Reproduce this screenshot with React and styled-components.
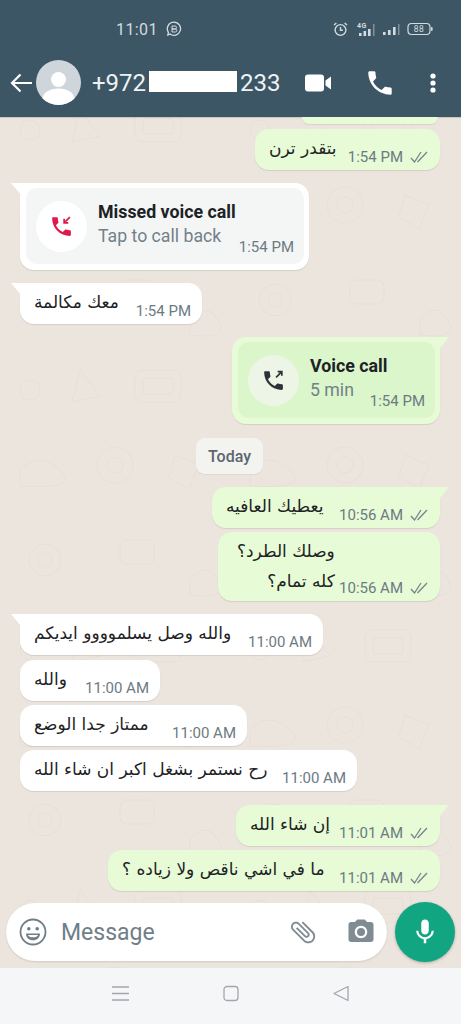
import React from "react";
import styled, { createGlobalStyle } from "styled-components";

const doodle = encodeURIComponent(`<svg xmlns="http://www.w3.org/2000/svg" width="230" height="260" fill="none" stroke="#e7dfd7" stroke-width="1"><circle cx="45" cy="40" r="16"/><circle cx="45" cy="40" r="7"/><rect x="120" y="20" width="34" height="24" rx="6"/><path d="M190 60q16-20 28 0t-28 15z"/><circle cx="30" cy="130" r="10"/><path d="M80 110l20 26-28 6z"/><rect x="135" y="110" width="46" height="32" rx="7"/><rect x="143" y="118" width="30" height="16" rx="4"/><path d="M20 210q20-20 40 0t-40 16z"/><circle cx="115" cy="205" r="18"/><circle cx="115" cy="205" r="8"/><path d="M175 195l24 10-10 24-20-12z"/></svg>`);

const Global = createGlobalStyle`
  html, body { margin: 0; padding: 0; background: #ebe4dc; }
  * { box-sizing: border-box; }
`;

const Phone = styled.div`
  width: 461px;
  height: 1024px;
  display: flex;
  flex-direction: column;
  overflow: hidden;
  font-family: Roboto, "Liberation Sans", sans-serif;
  background-color: #ece5dd;
  background-image: url("data:image/svg+xml,${doodle}");
`;

const Top = styled.div`
  background: #3c5665;
  height: 117px;
  flex: none;
  box-shadow: 0 1px 1px rgba(0, 0, 0, 0.12);
`;

const StatusBar = styled.div`
  height: 48px;
  padding: 10px 28px 0 116px;
  display: flex;
  align-items: center;
  color: #d3dbdf;
  font-size: 16px;
  letter-spacing: 0.4px;
`;

const StatusTime = styled.span`
  width: 50px;
`;

const StatusRight = styled.div`
  margin-left: auto;
  display: flex;
  align-items: center;
  gap: 5px;
`;

const Header = styled.div`
  height: 69px;
  padding: 0 20px 0 10px;
  display: flex;
  align-items: center;
  color: #fff;
`;

const Avatar = styled.div`
  margin-left: 4px;
  width: 45px;
  height: 45px;
  border-radius: 50%;
  overflow: hidden;
  flex: none;
`;

const Name = styled.div`
  margin-left: 11px;
  width: 185px;
  font-size: 24px;
  display: flex;
  align-items: center;
  color: #eef2f4;
  flex: none;
`;

const Redacted = styled.span`
  flex: none;
  width: 88px;
  height: 21px;
  margin: 0 3px 2px 3px;
  background: #fff;
`;

const HeaderIcons = styled.div`
  margin-left: 28px;
  display: flex;
  align-items: center;
  gap: 36px;
`;

const Chat = styled.div`
  flex: 1;
  min-height: 0;
  padding: 0 21px 0 20px;
  display: flex;
  flex-direction: column;
`;

const Stub = styled.div`
  align-self: flex-end;
  width: 136px;
  height: 7px;
  margin-right: 2px;
  background: #e6fbd6;
  border-radius: 0 0 14px 14px;
  box-shadow: 0 1px 1px rgba(0, 0, 0, 0.08);
`;

const Bubble = styled.div`
  position: relative;
  align-self: ${(p) => (p.$out ? "flex-end" : "flex-start")};
  width: ${(p) => p.$w}px;
  min-height: 41px;
  margin-top: ${(p) => p.$top}px;
  padding: 0 ${(p) => (p.$out ? 12 : 11)}px 0 14px;
  display: flex;
  justify-content: space-between;
  background: ${(p) => (p.$out ? "#e6fbd6" : "#fff")};
  border-radius: ${(p) => {
    if (!p.$tail) return "14px";
    return p.$out ? "14px 0 14px 14px" : "0 14px 14px 14px";
  }};
  box-shadow: 0 1px 1px rgba(0, 0, 0, 0.1);

  ${(p) =>
    p.$tail &&
    `&::before {
      content: "";
      position: absolute;
      top: 0;
      ${p.$out ? "right: -9px;" : "left: -9px;"}
      width: 10px;
      height: 12px;
      background: inherit;
      clip-path: ${
        p.$out ? "polygon(0 0, 100% 0, 0 100%)" : "polygon(0 0, 100% 0, 100% 100%)"
      };
    }`}
`;

const Message = styled.div`
  direction: rtl;
  text-align: right;
  font-family: "DejaVu Sans", "Noto Sans", sans-serif;
  font-size: 17px;
  line-height: 30px;
  color: #1d2225;
  padding: 4px 0 5px;
  margin-left: ${(p) => p.$indent || 0}px;
  white-space: nowrap;
`;

const Meta = styled.div`
  align-self: flex-end;
  display: flex;
  align-items: center;
  gap: 7px;
  height: 18px;
  margin-bottom: 4px;
  color: #6c7a82;
  font-size: 15px;
  white-space: nowrap;
`;

const CallBubble = styled(Bubble)`
  min-height: 0;
  padding: 5px 5px 6px 6px;
  display: block;
`;

const CallPanel = styled.div`
  height: ${(p) => p.$h}px;
  border-radius: 11px;
  background: ${(p) => (p.$out ? "#dcf6cb" : "#f4f6f6")};
  padding: 0 10px 0 10px;
  display: flex;
  align-items: center;
  position: relative;
`;

const CallCircle = styled.div`
  width: 51px;
  height: 51px;
  border-radius: 50%;
  flex: none;
  background: ${(p) => (p.$out ? "#edf5e6" : "#fff")};
  display: flex;
  align-items: center;
  justify-content: center;
`;

const CallText = styled.div`
  margin: 0 0 3px 11px;
  display: flex;
  flex-direction: column;
  gap: 3px;
  flex: 1;
`;

const CallTitle = styled.div`
  font-weight: 700;
  font-size: 17.8px;
  line-height: 20px;
  color: #1c2225;
`;

const CallSub = styled.div`
  display: flex;
  justify-content: space-between;
  align-items: flex-end;
  font-size: 17.7px;
  line-height: 22px;
  color: #738089;
`;

const CallTime = styled.span`
  font-size: 15px;
  line-height: 18px;
  color: #6c7a82;
  position: relative;
  top: 9px;
`;

const DayChip = styled.div`
  align-self: center;
  margin: 14px 0 0 -1px;
  width: 67px;
  height: 36px;
  border-radius: 9px;
  background: #f3f3f0;
  color: #5a676e;
  font-size: 16px;
  font-weight: 500;
  display: flex;
  align-items: center;
  justify-content: center;
  box-shadow: 0 1px 1px rgba(0, 0, 0, 0.06);
`;

const Composer = styled.div`
  flex: none;
  height: 76px;
  padding: 4px 6px 0;
  display: flex;
  align-items: center;
  gap: 8px;
`;

const InputPill = styled.div`
  width: 382px;
  height: 58px;
  border-radius: 29px;
  background: #fff;
  box-shadow: 0 1px 2px rgba(0, 0, 0, 0.12);
  display: flex;
  align-items: center;
  padding: 0 11px 0 13px;
  color: #6f7e87;
  font-size: 23px;
`;

const Placeholder = styled.span`
  margin-left: 14px;
  flex: 1;
`;

const PillIcons = styled.div`
  display: flex;
  align-items: center;
  gap: 28px;
`;

const MicButton = styled.div`
  width: 60px;
  height: 60px;
  border-radius: 50%;
  background: #12a581;
  box-shadow: 0 1px 3px rgba(0, 0, 0, 0.25);
  display: flex;
  align-items: center;
  justify-content: center;
  flex: none;
`;

const NavBar = styled.div`
  flex: none;
  height: 56px;
  background: #f5f6f8;
  display: flex;
  align-items: center;
  padding: 0 112px 6px;
  justify-content: space-between;
`;

const Ticks = () => (
  <svg width="18" height="12" viewBox="0 0 18 12" fill="none" stroke="#76848b" strokeWidth="1.3">
    <path d="M1 7l3.5 4L11 1M7.5 11L17 1" />
  </svg>
);

const CALL =
  "M6.62 10.79c1.44 2.83 3.76 5.14 6.59 6.59l2.2-2.2c.27-.27.67-.36 1.02-.24 1.12.37 2.33.57 3.57.57.55 0 1 .45 1 1V20c0 .55-.45 1-1 1-9.39 0-17-7.61-17-17 0-.55.45-1 1-1h3.5c.55 0 1 .45 1 1 0 1.25.2 2.45.57 3.57.11.35.03.74-.25 1.02l-2.2 2.2z";

const CallGlyph = ({ color, arrow }) => (
  <svg width="25" height="25" viewBox="0 0 24 24">
    <path d={CALL} fill={color} />
    <path d={arrow} fill="none" stroke={color} strokeWidth="1.6" />
  </svg>
);

const Out = ({ w, top, tail, time, indent, children }) => (
  <Bubble $out $w={w} $top={top} $tail={tail}>
    <Message $indent={indent}>{children}</Message>
    <Meta>
      {time}
      <Ticks />
    </Meta>
  </Bubble>
);

const In = ({ w, top, tail, time, children }) => (
  <Bubble $w={w} $top={top} $tail={tail}>
    <Message>{children}</Message>
    <Meta>{time}</Meta>
  </Bubble>
);

export default function App() {
  return (
    <Phone>
      <Global />
      <Top>
        <StatusBar>
          <StatusTime>11:01</StatusTime>
          <svg width="16" height="16" viewBox="0 0 16 16" fill="none" stroke="#d3dbdf" strokeWidth="1.3">
            <path d="M8 1.2a6.6 6.6 0 1 1-4 11.900L1.800 14l.6-2.600A6.600 6.600 0 0 1 8 1.200z" />
            <path d="M6 5h3a1.400 1.400 0 0 1 0 3H6zm0 3h3.400a1.500 1.500 0 0 1 0 3H6z" strokeWidth="1" />
          </svg>
          <StatusRight>
            <svg width="15" height="15" viewBox="0 0 15 15" fill="none" stroke="#d3dbdf" strokeWidth="1.400">
              <circle cx="7.500" cy="8" r="5.400" />
              <path d="M7.500 5v3.200h2.400M1 3l2.400-2M14 3l-2.400-2" />
            </svg>
            <svg width="24" height="16" viewBox="0 0 24 16" fill="#d3dbdf">
              <text x="4" y="7" fontSize="7" fontFamily="Roboto" fontWeight="700">4G</text>
              <rect x="6" y="12" width="2.600" height="3" />
              <rect x="10.500" y="10" width="2.600" height="5" />
              <rect x="15" y="8" width="2.600" height="7" />
              <rect x="20" y="3" width="1.500" height="12" opacity=".45" />
            </svg>
            <svg width="20" height="14" viewBox="0 0 20 14" fill="#d3dbdf">
              <rect x="1" y="10" width="2.600" height="3" />
              <rect x="6" y="8" width="2.600" height="5" />
              <rect x="11" y="5" width="2.600" height="8" />
              <rect x="16" y="2" width="1.500" height="11" opacity=".45" />
            </svg>
            <svg width="26" height="14" viewBox="0 0 26 14" fill="none">
              <rect x="1" y="1.500" width="22" height="11" rx="3.500" stroke="#d3dbdf" strokeWidth="1.200" />
              <rect x="24" y="5" width="1.600" height="4" rx=".8" fill="#d3dbdf" />
              <text x="12" y="10" textAnchor="middle" fontSize="8.500" fontFamily="Roboto" fill="#d3dbdf">88</text>
            </svg>
          </StatusRight>
        </StatusBar>
        <Header>
          <svg width="22" height="20" viewBox="0 0 22 20" fill="none" stroke="#fff" strokeWidth="2.200">
            <path d="M22 10H2M10.500 1.500L2 10l8.500 8.500" />
          </svg>
          <Avatar>
            <svg width="45" height="45" viewBox="0 0 45 45">
              <rect width="45" height="45" fill="#ced6dc" />
              <circle cx="22.500" cy="19.500" r="7.500" fill="#fff" />
              <ellipse cx="22.500" cy="39" rx="16" ry="10.500" fill="#fff" />
            </svg>
          </Avatar>
          <Name>
            +972
            <Redacted />
            233
          </Name>
          <HeaderIcons>
            <svg width="26" height="18" viewBox="0 0 26 18" fill="#fff">
              <rect x="0" y="0.500" width="19" height="17" rx="3" />
              <path d="M20.500 6.500L26 2.500v13l-5.500-4z" />
            </svg>
            <svg width="26" height="26" viewBox="2 2 20 20" fill="#fff">
              <path d={CALL} />
            </svg>
            <svg width="8" height="20" viewBox="0 0 8 20" fill="#fff">
              <circle cx="4" cy="3" r="2.600" />
              <circle cx="4" cy="10" r="2.600" />
              <circle cx="4" cy="17" r="2.600" />
            </svg>
          </HeaderIcons>
        </Header>
      </Top>
      <Chat>
        <Stub />
        <Out w={185} top={5} time="1:54 PM">بتقدر ترن</Out>

        <CallBubble $w={289} $top={13} $tail>
          <CallPanel $h={76}>
            <CallCircle>
              <CallGlyph color="#e0184d" arrow="M20 3l-5.500 5.500M14.500 4.500v4h4" />
            </CallCircle>
            <CallText>
              <CallTitle>Missed voice call</CallTitle>
              <CallSub>
                Tap to call back
                <CallTime>1:54 PM</CallTime>
              </CallSub>
            </CallText>
          </CallPanel>
        </CallBubble>

        <In w={182} top={13} tail time="1:54 PM">معك مكالمة</In>

        <CallBubble $out $w={208} $top={13} $tail>
          <CallPanel $out $h={76}>
            <CallCircle $out>
              <CallGlyph color="#2c3338" arrow="M14.500 9L20 3.500M16 3.500h4v4" />
            </CallCircle>
            <CallText>
              <CallTitle>Voice call</CallTitle>
              <CallSub>
                5 min
                <CallTime>1:54 PM</CallTime>
              </CallSub>
            </CallText>
          </CallPanel>
        </CallBubble>

        <DayChip>Today</DayChip>

        <Out w={228} top={13} tail time="10:56 AM">يعطيك العافيه</Out>
        <Out w={222} top={4} indent={5} time="10:56 AM">
          وصلك الطرد؟
          <br />
          كله تمام؟
        </Out>

        <In w={303} top={13} tail time="11:00 AM">والله وصل يسلموووو ايديكم</In>
        <In w={140} top={5} time="11:00 AM">والله</In>
        <In w={227} top={4} time="11:00 AM">ممتاز جدا الوضع</In>
        <In w={337} top={4} time="11:00 AM">رح نستمر بشغل اكبر ان شاء الله</In>

        <Out w={204} top={14} tail time="11:01 AM">إن شاء الله</Out>
        <Out w={332} top={4} time="11:01 AM">ما في اشي ناقص ولا زياده ؟</Out>
      </Chat>
      <Composer>
        <InputPill>
          <svg width="28" height="28" viewBox="0 0 28 28" fill="none" stroke="#6f7e87" strokeWidth="1.800">
            <circle cx="14" cy="14" r="12.500" />
            <circle cx="9.800" cy="10.800" r="1.800" fill="#6f7e87" stroke="none" />
            <circle cx="18.200" cy="10.800" r="1.800" fill="#6f7e87" stroke="none" />
            <path d="M7 15.500h14c0 4-3 6.800-7 6.800s-7-2.800-7-6.800z" fill="#6f7e87" stroke="none" />
            <path d="M9 17h10c-.5 1.500-2.500 2.300-5 2.300S9.500 18.500 9 17z" fill="#fff" stroke="none" />
          </svg>
          <Placeholder>Message</Placeholder>
          <PillIcons>
            <svg width="30" height="30" viewBox="0 0 24 24" fill="#7f8c94" transform="rotate(-45)">
              <path d="M16.500 6v11.500c0 2.210-1.790 4-4 4s-4-1.790-4-4V5c0-1.380 1.120-2.500 2.500-2.500s2.500 1.120 2.500 2.500v10.500c0 .55-.45 1-1 1s-1-.45-1-1V6H10v9.500c0 1.380 1.120 2.500 2.500 2.500s2.500-1.120 2.500-2.500V5c0-2.210-1.790-4-4-4S7 2.790 7 5v12.500c0 3.040 2.460 5.500 5.500 5.500s5.500-2.460 5.500-5.500V6h-1.500z" />
            </svg>
            <svg width="30" height="30" viewBox="0 0 24 24" fill="#7f8c94">
              <path d="M9 2L7.170 4H4c-1.100 0-2 .9-2 2v12c0 1.100.9 2 2 2h16c1.100 0 2-.9 2-2V6c0-1.100-.9-2-2-2h-3.170L15 2H9zm3 15c-2.760 0-5-2.240-5-5s2.240-5 5-5 5 2.240 5 5-2.240 5-5 5z" />
              <circle cx="12" cy="12" r="3.200" />
            </svg>
          </PillIcons>
        </InputPill>
        <MicButton>
          <svg width="30" height="30" viewBox="0 0 24 24" fill="#fff">
            <path d="M12 14c1.660 0 3-1.340 3-3V5c0-1.660-1.340-3-3-3S9 3.340 9 5v6c0 1.660 1.340 3 3 3z" />
            <path d="M17.300 11c0 3-2.540 5.100-5.300 5.100S6.700 14 6.700 11H5c0 3.410 2.720 6.230 6 6.720V21h2v-3.280c3.280-.48 6-3.300 6-6.720h-1.700z" />
          </svg>
        </MicButton>
      </Composer>
      <NavBar>
        <svg width="17" height="17" viewBox="0 0 17 17" stroke="#a3a7ac" strokeWidth="1.300">
          <path d="M0 2h17M0 8.500h17M0 15h17" />
        </svg>
        <svg width="16" height="17" viewBox="0 0 16 17" fill="none" stroke="#a3a7ac" strokeWidth="1.300">
          <rect x="1" y="1.500" width="14" height="14" rx="3" />
        </svg>
        <svg width="16" height="17" viewBox="0 0 16 17" fill="none" stroke="#a3a7ac" strokeWidth="1.300">
          <path d="M15 1.500v14L1 8.500z" strokeLinejoin="round" />
        </svg>
      </NavBar>
    </Phone>
  );
}
